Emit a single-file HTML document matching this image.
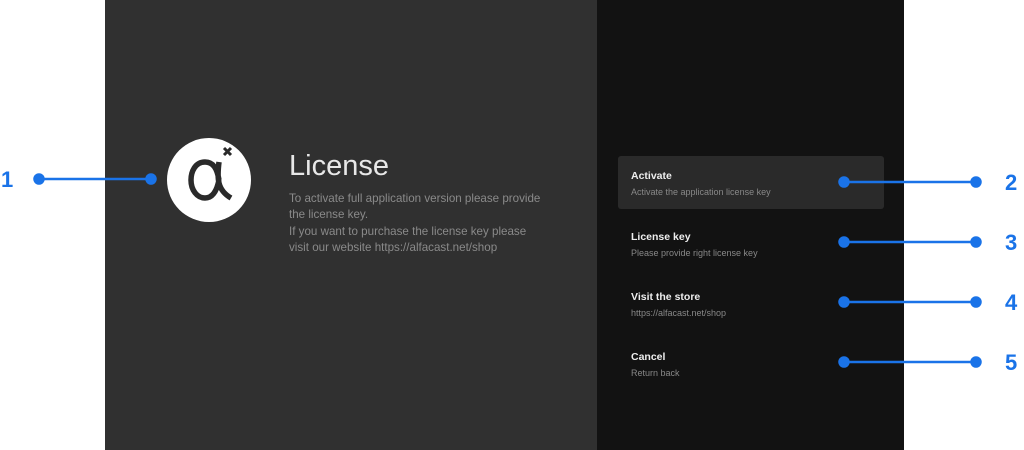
<!DOCTYPE html>
<html><head><meta charset="utf-8"><style>
body{margin:0;width:1024px;height:450px;background:#fff;position:relative;overflow:hidden;font-family:"Liberation Sans",sans-serif}
.l{position:absolute;left:105px;top:0;width:492px;height:450px;background:#303030}
.r{position:absolute;left:597px;top:0;width:307px;height:450px;background:#121212}
.circ{position:absolute;left:167px;top:138px;width:84px;height:84px;border-radius:50%;background:#fff}
.t{position:absolute;color:#eee;font-size:10.5px;font-weight:bold;left:631px}
.s{position:absolute;color:#888;font-size:9px;left:631px}
.n{position:absolute;color:#1a73e8;font-weight:bold;font-size:22px}
.hl{position:absolute;left:618px;top:156px;width:266px;height:53px;background:#2a2a2a;border-radius:3px}
</style></head><body>
<div class="l"></div><div class="r"></div>
<div class="circ"></div>
<svg style="position:absolute;left:167px;top:138px" width="84" height="84">
<path d="M52 24 C50 40 50 52 64 60 M52 42 C50 30 46 24 38 24 C28 24 24 34 24 42 C24 52 30 60 38 60 C46 60 50 52 52 42" stroke="#2a2a2a" stroke-width="5.5" fill="none"/>
<path d="M57 10 l7 7 M64 10 l-7 7" stroke="#2a2a2a" stroke-width="3"/>
</svg>
<div style="position:absolute;left:289px;top:150px;color:#e8e8e8;font-size:29px">License</div>
<div style="position:absolute;left:289px;top:191px;color:#8a8a8a;font-size:11.6px;line-height:16.3px;width:258px">To activate full application version please provide the license key.<br>If you want to purchase the license key please visit our website https://alfacast.net/shop</div>
<div class="hl"></div>
<div class="t" style="top:170px">Activate</div><div class="s" style="top:187px">Activate the application license key</div>
<div class="t" style="top:231px">License key</div><div class="s" style="top:248px">Please provide right license key</div>
<div class="t" style="top:291px">Visit the store</div><div class="s" style="top:308px">https://alfacast.net/shop</div>
<div class="t" style="top:351px">Cancel</div><div class="s" style="top:368px">Return back</div>
<svg style="position:absolute;left:0;top:0" width="1024" height="450">
<g stroke="#1a73e8" stroke-width="2.5" fill="#1a73e8">
<line x1="39" y1="179" x2="151" y2="179"/><circle cx="39" cy="179" r="4.5"/><circle cx="151" cy="179" r="4.5"/>
<line x1="844" y1="182" x2="976" y2="182"/><circle cx="844" cy="182" r="4.5"/><circle cx="976" cy="182" r="4.5"/>
<line x1="844" y1="242" x2="976" y2="242"/><circle cx="844" cy="242" r="4.5"/><circle cx="976" cy="242" r="4.5"/>
<line x1="844" y1="302" x2="976" y2="302"/><circle cx="844" cy="302" r="4.5"/><circle cx="976" cy="302" r="4.5"/>
<line x1="844" y1="362" x2="976" y2="362"/><circle cx="844" cy="362" r="4.5"/><circle cx="976" cy="362" r="4.5"/>
</g></svg>
<div class="n" style="left:1px;top:167px">1</div>
<div class="n" style="left:1005px;top:170px">2</div>
<div class="n" style="left:1005px;top:230px">3</div>
<div class="n" style="left:1005px;top:290px">4</div>
<div class="n" style="left:1005px;top:350px">5</div>
</body></html>
